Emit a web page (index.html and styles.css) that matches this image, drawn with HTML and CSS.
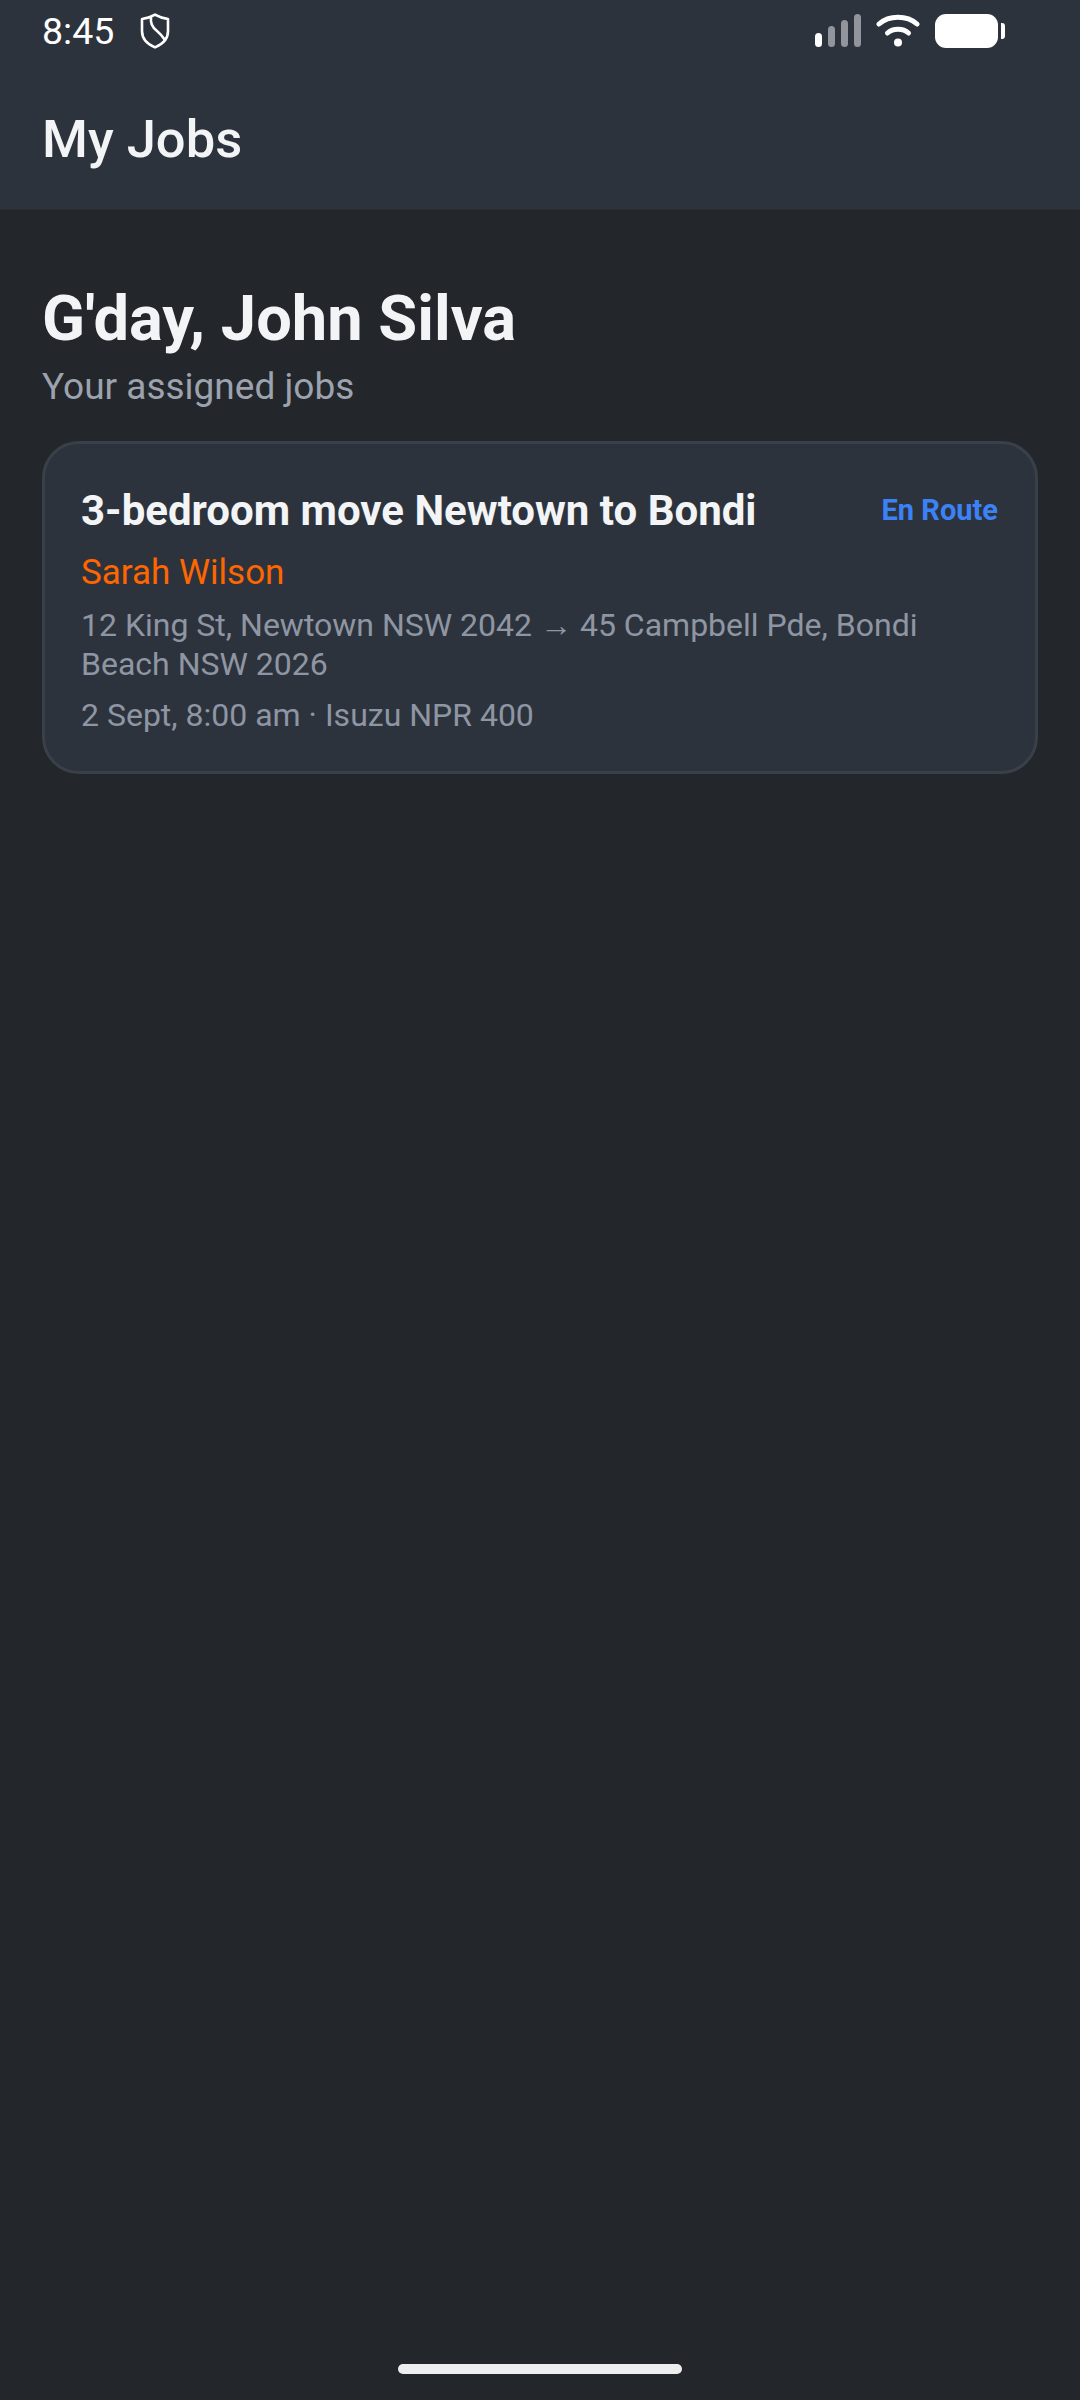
FILE: index.html
```html
<!DOCTYPE html>
<html lang="en">
<head>
    <meta charset="UTF-8">
    <meta name="viewport" content="width=device-width, initial-scale=1.0">
    <title>My Jobs</title>
    <link rel="stylesheet" href="styles.css">
</head>
<body>
    <header class="top">
        <div class="status">
            <div class="status-left">
                <span class="time">8:45</span>
                <svg class="shield" viewBox="0 0 30 36" width="30" height="36" fill="none" stroke="#fff" stroke-width="2.6" stroke-linejoin="round" stroke-linecap="round">
                    <path d="M15 1.6 C19 4 24 5.4 28 6 V18 C28 26 22 31.5 15 34.4 C8 31.5 2 26 2 18 V6 C6 5.4 11 4 15 1.6 Z"/>
                    <path d="M11 4.5 C10 11 13 15 17 18 C20 20.5 23 24 25 27" />
                </svg>
            </div>
            <div class="status-right">
                <svg class="signal" viewBox="0 0 46 34" width="46" height="34">
                    <rect x="0" y="19" width="7" height="14" rx="3.5" fill="#fff"/>
                    <rect x="13" y="12" width="7" height="21" rx="3.5" fill="#92959b"/>
                    <rect x="26" y="6" width="7" height="27" rx="3.5" fill="#92959b"/>
                    <rect x="39" y="0" width="7" height="33" rx="3.5" fill="#92959b"/>
                </svg>
                <svg class="wifi" viewBox="0 0 44 34" width="44" height="34" fill="none" stroke="#fff" stroke-width="5" stroke-linecap="round">
                    <path d="M3 10 C13 1 31 1 41 10"/>
                    <path d="M11.5 19 C17 14 27 14 32.5 19"/>
                    <circle cx="22" cy="28.5" r="4" fill="#fff" stroke="none"/>
                </svg>
                <div class="battery"><span class="battery-body"></span><span class="battery-tip"></span></div>
            </div>
        </div>
        <h1 class="page-title">My Jobs</h1>
    </header>

    <main class="content">
        <h2 class="greeting">G'day, John Silva</h2>
        <p class="sub">Your assigned jobs</p>

        <section class="job-card">
            <div class="job-head">
                <h3 class="job-title">3-bedroom move Newtown to Bondi</h3>
                <span class="job-status">En Route</span>
            </div>
            <p class="job-client">Sarah Wilson</p>
            <p class="job-address">12 King St, Newtown NSW 2042 → 45 Campbell Pde, Bondi Beach NSW 2026</p>
            <p class="job-meta">2 Sept, 8:00 am · Isuzu NPR 400</p>
        </section>
    </main>

    <div class="home-bar"><span class="home-pill"></span></div>
</body>
</html>
```

FILE: styles.css
```css
* {
    box-sizing: border-box;
}
body {
    margin: 0;
    height: 2400px;
    display: flex;
    flex-direction: column;
    font-family: Roboto, sans-serif;
    background-color: #23262b;
    color: #f3f4f6;
}
h1, h2, h3, p {
    margin: 0;
}
.top {
    height: 210px;
    flex: none;
    background-color: #2d333d;
    border-bottom: 1px solid #282c33;
    padding: 0 42px;
}
.status {
    height: 62px;
    display: flex;
    align-items: center;
    justify-content: space-between;
}
.status-left {
    display: flex;
    align-items: center;
    gap: 25px;
}
.time {
    font-size: 37.5px;
    color: #fff;
}
.shield {
    margin-left: 1px;
}
.status-right {
    display: flex;
    align-items: center;
    gap: 15px;
    margin-right: 33px;
}
.battery {
    display: flex;
    align-items: center;
    gap: 3px;
}
.battery-body {
    width: 63px;
    height: 34px;
    border-radius: 11px;
    background: #fff;
}
.battery-tip {
    width: 4px;
    height: 16px;
    border-radius: 0 3px 3px 0;
    background: #fff;
}
.page-title {
    margin-top: 47px;
    font-size: 52.5px;
    line-height: 60px;
    font-weight: 500;
}
.content {
    flex: 1;
    padding: 71px 42px 0;
}
.greeting {
    font-size: 63.2px;
    line-height: 74px;
    font-weight: 700;
}
.sub {
    margin-top: 10px;
    font-size: 37px;
    line-height: 44px;
    color: #9ca3af;
}
.job-card {
    margin-top: 32px;
    padding: 42px 36px 36px;
    border: 3px solid #3a404a;
    border-radius: 37px;
    background-color: #2d333d;
}
.job-head {
    display: flex;
    justify-content: space-between;
    align-items: center;
}
.job-title {
    font-size: 42px;
    line-height: 49px;
    font-weight: 700;
}
.job-status {
    padding: 0 1px 2px 0;
    font-size: 29px;
    font-weight: 700;
    color: #3b82f6;
}
.job-client {
    margin-top: 17px;
    font-size: 35px;
    line-height: 41px;
    color: #ff6600;
}
.job-address {
    margin-top: 13px;
    font-size: 32px;
    line-height: 39px;
    color: #8f96a3;
}
.job-meta {
    margin-top: 12px;
    font-size: 32px;
    line-height: 39px;
    color: #8f96a3;
}
.home-bar {
    height: 40px;
    flex: none;
    display: flex;
    justify-content: center;
}
.home-pill {
    width: 284px;
    height: 10px;
    margin-top: 4px;
    border-radius: 5px;
    background: #eeeeee;
}
```
